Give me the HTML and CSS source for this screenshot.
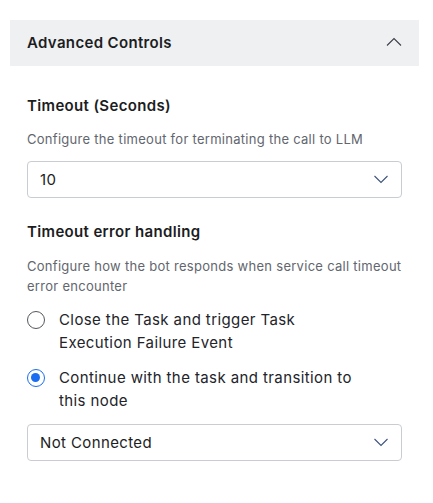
FILE: index.html
```html
<!DOCTYPE html>
<html>
<head>
<meta charset="utf-8">
<link rel="stylesheet" href="styles.css">
</head>
<body>
<div class="panel">
  <div class="header">
    <span class="header-title">Advanced Controls</span>
    <svg class="chev" width="16" height="9" viewBox="0 0 16 9"><path d="M1 8.5 L8 1.5 L15 8.5" fill="none" stroke="#3b3f48" stroke-width="1.1"/></svg>
  </div>
  <div class="body">
    <div class="field-title t1">Timeout (Seconds)</div>
    <div class="desc d1">Configure the timeout for terminating the call to LLM</div>
    <div class="select">
      <span>10</span>
      <svg class="chev-down" width="16" height="9" viewBox="0 0 16 9"><path d="M1.5 1 L8 7.5 L14.5 1" fill="none" stroke="#3d5478" stroke-width="1.1"/></svg>
    </div>
    <div class="field-title t2">Timeout error handling</div>
    <div class="desc d2">Configure how the bot responds when service call timeout error encounter</div>
    <div class="radios">
      <label class="radio">
        <span class="dot"></span>
        <span class="radio-text">Close the Task and trigger Task<br>Execution Failure Event</span>
      </label>
      <label class="radio">
        <span class="dot checked"></span>
        <span class="radio-text">Continue with the task and transition to<br>this node</span>
      </label>
    </div>
    <div class="select s2">
      <span>Not Connected</span>
      <svg class="chev-down" width="16" height="9" viewBox="0 0 16 9"><path d="M1.5 1 L8 7.5 L14.5 1" fill="none" stroke="#3d5478" stroke-width="1.1"/></svg>
    </div>
  </div>
</div>
</body>
</html>
```
FILE: styles.css
```css
html, body {
  margin: 0;
  padding: 0;
  background: #fff;
}
body {
  font-family: Inter, "Noto Sans", sans-serif;
  color: #1c1d22;
}
.panel {
  padding: 20px 14px 0 10px;
}
.header {
  height: 46px;
  background: #eef0f2;
  display: flex;
  align-items: center;
  justify-content: space-between;
  padding: 0 17px 0 17px;
}
.header-title {
  font-size: 15px;
  font-weight: 600;
  line-height: 20px;
  letter-spacing: 0.35px;
}
.chev {
  margin-top: -4px;
}
.body {
  padding: 30px 17px 0 17px;
}
.field-title {
  font-size: 15px;
  font-weight: 600;
  line-height: 20px;
  letter-spacing: 0.35px;
}
.t2 {
  margin-top: 24px;
}
.desc {
  font-size: 13px;
  line-height: 20px;
  color: #62666e;
  letter-spacing: 0.28px;
}
.d1 {
  margin-top: 13px;
}
.d2 {
  margin-top: 14px;
}
.select {
  margin-top: 12px;
  height: 37px;
  box-sizing: border-box;
  border: 1px solid #c9ccd1;
  border-radius: 4px;
  display: flex;
  align-items: center;
  justify-content: space-between;
  padding: 0 12px 0 12px;
  font-size: 15px;
  letter-spacing: 0.38px;
  color: #1c1d22;
}
.s2 {
  margin-top: 12px;
}
.radios {
  margin-top: 12px;
  display: flex;
  flex-direction: column;
  gap: 12px;
}
.radio {
  display: flex;
  align-items: flex-start;
  gap: 14px;
}
.dot {
  flex: none;
  width: 18px;
  height: 18px;
  box-sizing: border-box;
  border: 1.5px solid #54575e;
  border-radius: 50%;
  margin-top: 2.5px;
  position: relative;
}
.dot.checked {
  border-color: #1a6df0;
}
.dot.checked::after {
  content: "";
  position: absolute;
  left: 3px;
  top: 3px;
  width: 9px;
  height: 9px;
  border-radius: 50%;
  background: #1a6df0;
}
.radio-text {
  font-size: 15px;
  line-height: 23px;
  letter-spacing: 0.4px;
  color: #23242a;
}
```
